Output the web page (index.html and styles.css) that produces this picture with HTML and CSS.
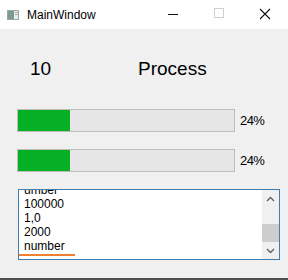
FILE: index.html
```html
<!DOCTYPE html>
<html lang="en">
<head>
    <meta charset="UTF-8">
    <meta name="viewport" content="width=device-width, initial-scale=1.0">
    <title>MainWindow</title>
    <link rel="stylesheet" href="styles.css">
</head>
<body>
    <div class="window">
        <div class="title-bar">
            <svg class="app-icon" width="12" height="10" viewBox="0 0 12 10">
                <rect x="0.5" y="0.5" width="11" height="9" fill="#e8ecea" stroke="#9aa8a3"/>
                <rect x="1" y="1" width="6" height="8" fill="#7f9a90"/>
                <rect x="8" y="2" width="3" height="1" fill="#a8b4b0"/>
                <rect x="8" y="4" width="3" height="1" fill="#a8b4b0"/>
            </svg>
            <span class="title">MainWindow</span>
            <div class="controls">
                <svg width="46" height="29" viewBox="0 0 46 29"><line x1="18" y1="14.5" x2="28" y2="14.5" stroke="#111" stroke-width="1"/></svg>
                <svg width="46" height="29" viewBox="0 0 46 29"><rect x="18.5" y="8.5" width="9" height="9" fill="none" stroke="#cfcfcf"/></svg>
                <svg width="46" height="29" viewBox="0 0 46 29"><path d="M18 9 L28 19 M28 9 L18 19" stroke="#111" stroke-width="1.1"/></svg>
            </div>
        </div>

        <div class="content">
            <div class="header-row">
                <span class="count">10</span>
                <span class="process">Process</span>
            </div>

            <div class="progress-row">
                <div class="progress"><div class="progress-fill" style="width: 24%"></div></div>
                <span class="percent">24%</span>
            </div>
            <div class="progress-row">
                <div class="progress"><div class="progress-fill" style="width: 24%"></div></div>
                <span class="percent">24%</span>
            </div>

            <div class="text-box">
                <div class="text-view">
                    <div class="text-lines">
                        <div class="line">umber</div>
                        <div class="line">100000</div>
                        <div class="line">1,0</div>
                        <div class="line">2000</div>
                        <div class="line">number</div>
                        <div class="compose-mark"></div>
                    </div>
                </div>
                <div class="scrollbar">
                    <div class="scroll-btn">
                        <svg width="9" height="6" viewBox="0 0 9 6"><polyline points="1,5 4.5,1.5 8,5" fill="none" stroke="#606060" stroke-width="1.4"/></svg>
                    </div>
                    <div class="scroll-track"><div class="scroll-thumb"></div></div>
                    <div class="scroll-btn">
                        <svg width="9" height="6" viewBox="0 0 9 6"><polyline points="1,1 4.5,4.5 8,1" fill="none" stroke="#606060" stroke-width="1.4"/></svg>
                    </div>
                </div>
            </div>
        </div>
    </div>
</body>
</html>
```

FILE: styles.css
```css
html, body {
    margin: 0;
    padding: 0;
    background-color: #f0f0f0;
}
body {
    font-family: "Liberation Sans", Arial, sans-serif;
    color: #000;
}
.window {
    height: 280px;
    box-sizing: border-box;
    border-bottom: 2px solid #505050;
    display: flex;
    flex-direction: column;
}
.title-bar {
    height: 29px;
    background-color: #fff;
    display: flex;
    align-items: center;
}
.app-icon {
    margin-left: 7px;
    margin-right: 8px;
}
.title {
    font-size: 12px;
    flex: 1;
}
.controls {
    display: flex;
    margin-right: 0;
}
.controls svg {
    display: block;
}
.content {
    padding: 29px 0 0 17px;
}
.header-row {
    display: grid;
    grid-template-columns: 108px auto;
    padding-left: 13px;
    font-size: 19px;
    line-height: 22px;
}
.progress-row {
    display: flex;
    align-items: center;
    gap: 5px;
    margin-top: 17px;
}
.header-row + .progress-row {
    margin-top: 29px;
}
.progress {
    width: 218px;
    height: 23px;
    box-sizing: border-box;
    border: 1px solid #bcbcbc;
    background-color: #e6e6e6;
}
.progress-fill {
    height: 100%;
    background-color: #06b025;
}
.percent {
    font-size: 13px;
    letter-spacing: -0.6px;
}
.text-box {
    margin: 17px 0 0 1px;
    width: 262px;
    height: 71px;
    box-sizing: border-box;
    border: 1px solid #3e7eb0;
    background-color: #fff;
    display: flex;
}
.text-view {
    flex: 1;
    overflow: hidden;
}
.text-lines {
    margin-top: -7px;
    font-size: 12px;
    line-height: 14px;
}
.line {
    padding-left: 5px;
}
.compose-mark {
    width: 56px;
    height: 2px;
    margin-top: 1px;
    background-color: #f08030;
}
.scrollbar {
    width: 17px;
    background-color: #f0f0f0;
    display: flex;
    flex-direction: column;
}
.scroll-btn {
    height: 17px;
    display: flex;
    align-items: center;
    justify-content: center;
}
.scroll-track {
    flex: 1;
    display: flex;
    flex-direction: column;
    justify-content: flex-end;
}
.scroll-thumb {
    height: 18px;
    background-color: #cdcdcd;
}
```
